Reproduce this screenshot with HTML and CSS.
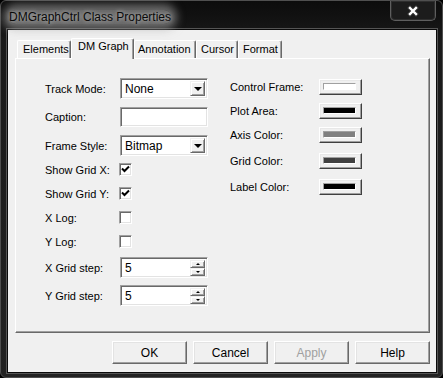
FILE: index.html
```html
<!DOCTYPE html>
<html lang="en">
<head>
    <meta charset="UTF-8">
    <title>DMGraphCtrl Class Properties</title>
    <link rel="stylesheet" href="styles.css">
</head>
<body>
    <div class="window">
        <div class="titlebar">
            <span class="title">DMGraphCtrl Class Properties</span>
            <div class="close-btn">
                <svg width="14" height="12" viewBox="0 0 14 12">
                    <path d="M4 3 L10 9 M10 3 L4 9" stroke="#303030" stroke-width="4.5" stroke-linecap="square"/>
                    <path d="M4 3 L10 9 M10 3 L4 9" stroke="#ffffff" stroke-width="2.4" stroke-linecap="square"/>
                </svg>
            </div>
        </div>

        <div class="client">
            <div class="tabs">
                <div class="tab tab-elements">Elements</div>
                <div class="tab tab-active">DM Graph</div>
                <div class="tab tab-annotation">Annotation</div>
                <div class="tab tab-cursor">Cursor</div>
                <div class="tab tab-format">Format</div>
            </div>

            <div class="panel">
                <div class="col-left">
                    <div class="row row-combo">
                        <span class="label">Track Mode:</span>
                        <div class="field combo"><span class="value">None</span><span class="drop-btn"><i class="arrow"></i></span></div>
                    </div>
                    <div class="row row-edit">
                        <span class="label">Caption:</span>
                        <div class="field edit"></div>
                    </div>
                    <div class="row row-combo">
                        <span class="label">Frame Style:</span>
                        <div class="field combo"><span class="value">Bitmap</span><span class="drop-btn"><i class="arrow"></i></span></div>
                    </div>
                    <div class="row row-check first-check">
                        <span class="label">Show Grid X:</span>
                        <span class="checkbox"><svg width="9" height="9" viewBox="0 0 9 9"><path d="M1 3.5 L3.5 6 L8 1.5" fill="none" stroke="#000" stroke-width="2"/></svg></span>
                    </div>
                    <div class="row row-check">
                        <span class="label">Show Grid Y:</span>
                        <span class="checkbox"><svg width="9" height="9" viewBox="0 0 9 9"><path d="M1 3.5 L3.5 6 L8 1.5" fill="none" stroke="#000" stroke-width="2"/></svg></span>
                    </div>
                    <div class="row row-check">
                        <span class="label">X Log:</span>
                        <span class="checkbox"></span>
                    </div>
                    <div class="row row-check">
                        <span class="label">Y Log:</span>
                        <span class="checkbox"></span>
                    </div>
                    <div class="row row-spin first-spin">
                        <span class="label">X Grid step:</span>
                        <div class="field spin"><span class="value">5</span><span class="spin-btns"><span class="spin-btn"><i class="up"></i></span><span class="spin-btn"><i class="down"></i></span></span></div>
                    </div>
                    <div class="row row-spin">
                        <span class="label">Y Grid step:</span>
                        <div class="field spin"><span class="value">5</span><span class="spin-btns"><span class="spin-btn"><i class="up"></i></span><span class="spin-btn"><i class="down"></i></span></span></div>
                    </div>
                </div>

                <div class="col-right">
                    <div class="crow">
                        <span class="clabel">Control Frame:</span>
                        <span class="color-btn"><span class="swatch" style="background:#ffffff"></span></span>
                    </div>
                    <div class="crow">
                        <span class="clabel">Plot Area:</span>
                        <span class="color-btn"><span class="swatch" style="background:#000000"></span></span>
                    </div>
                    <div class="crow">
                        <span class="clabel">Axis Color:</span>
                        <span class="color-btn"><span class="swatch" style="background:#808080"></span></span>
                    </div>
                    <div class="crow wide">
                        <span class="clabel">Grid Color:</span>
                        <span class="color-btn"><span class="swatch" style="background:#404040"></span></span>
                    </div>
                    <div class="crow wide">
                        <span class="clabel">Label Color:</span>
                        <span class="color-btn"><span class="swatch" style="background:#000000"></span></span>
                    </div>
                </div>
            </div>

            <div class="buttons">
                <div class="btn">OK</div>
                <div class="btn">Cancel</div>
                <div class="btn disabled">Apply</div>
                <div class="btn">Help</div>
            </div>
        </div>
    </div>
</body>
</html>
```

FILE: styles.css
```css
body {
    margin: 0;
    background: #000;
    font-family: "Liberation Sans", Arial, sans-serif;
    font-size: 11px;
    color: #000;
}
.window {
    width: 443px;
    height: 378px;
    box-sizing: border-box;
    border: 1px solid #4f4f4f;
    border-radius: 6px;
    background: linear-gradient(#0c0c0c, #1a1a1a 40px, #222 100%);
    padding: 0 6px 5px 7px;
}
.titlebar {
    height: 29px;
    display: flex;
    justify-content: space-between;
    align-items: flex-start;
}
.title {
    font-size: 12px;
    color: #0a0a0a;
    margin: 9px 0 0 1px;
    line-height: 14px;
    background: rgba(175, 175, 175, 0.55);
    box-shadow: 0 0 9px 6px rgba(175, 175, 175, 0.55);
    border-radius: 8px;
    text-shadow: 0 0 4px rgba(230, 230, 230, 0.9);
}
.close-btn {
    width: 46px;
    height: 20px;
    box-sizing: border-box;
    border: 1px solid #5e5e5e;
    border-top: none;
    border-radius: 0 0 5px 5px;
    background: #1c1c1c;
    box-shadow: inset 0 0 0 1px #2e2e2e;
    display: flex;
    justify-content: center;
    align-items: center;
}
.client {
    height: 342px;
    background: #f0f0f0;
    box-shadow: 0 0 0 1px #0a0a0a, 0 0 0 2px #555;
}
.tabs {
    height: 28px;
    display: flex;
    align-items: flex-end;
    padding-left: 9px;
}
.tab {
    height: 18px;
    box-sizing: border-box;
    border-top: 1px solid #fff;
    border-left: 1px solid #fff;
    border-right: 1px solid #696969;
    border-radius: 2px 2px 0 0;
    box-shadow: inset -1px 0 #a0a0a0;
    padding: 2px 0 0 5px;
    background: #f0f0f0;
}
.tab-elements { width: 54px; }
.tab-active {
    width: 63px;
    height: 21px;
    margin-bottom: -1px;
    position: relative;
    z-index: 1;
    padding: 1px 0 0 6px;
}
.tab-annotation { width: 62px; padding-left: 3px; }
.tab-cursor { width: 42px; padding-left: 4px; }
.tab-format { width: 44px; padding-left: 4px; }
.panel {
    margin-left: 7px;
    width: 415px;
    height: 275px;
    box-sizing: border-box;
    border-top: 1px solid #fff;
    border-left: 1px solid #fff;
    border-right: 1px solid #696969;
    border-bottom: 1px solid #696969;
    box-shadow: inset -1px -1px #a0a0a0;
    padding: 19px 0 0 29px;
    display: flex;
    gap: 22px;
}
.col-left {
    width: 163px;
    display: flex;
    flex-direction: column;
}
.row {
    display: flex;
    align-items: center;
}
.row-combo, .row-edit {
    height: 21px;
    margin-bottom: 8px;
}
.row-edit { height: 20px; }
.row-check {
    height: 13px;
    margin-bottom: 11px;
}
.first-check { margin-top: -1px; }
.row-spin {
    height: 21px;
    margin-bottom: 7px;
}
.first-spin { margin-top: -2px; }
.label {
    width: 75px;
    flex-shrink: 0;
}
.field {
    width: 88px;
    height: 21px;
    flex-shrink: 0;
    box-sizing: border-box;
    border: 1px solid;
    border-color: #a0a0a0 #fff #fff #a0a0a0;
    box-shadow: inset 1px 1px #696969, inset -1px -1px #e3e3e3;
    background: #fff;
    display: flex;
    align-items: center;
    justify-content: space-between;
    padding: 0 2px 0 4px;
    font-size: 12px;
}
.edit { height: 20px; }
.checkbox {
    width: 13px;
    height: 13px;
    box-sizing: border-box;
    border: 1px solid;
    border-color: #a0a0a0 #fff #fff #a0a0a0;
    box-shadow: inset 1px 1px #696969, inset -1px -1px #e3e3e3;
    background: #fff;
    display: flex;
    align-items: center;
    justify-content: center;
    margin-left: -1px;
}
.drop-btn {
    width: 15px;
    height: 15px;
    box-sizing: border-box;
    border: 1px solid;
    border-color: #f0f0f0 #696969 #696969 #f0f0f0;
    box-shadow: inset 1px 1px #fff, inset -1px -1px #a0a0a0;
    background: #f0f0f0;
    display: flex;
    align-items: center;
    justify-content: center;
}
.arrow {
    width: 0;
    height: 0;
    border-left: 4px solid transparent;
    border-right: 4px solid transparent;
    border-top: 4px solid #000;
    margin-top: 1px;
}
.spin-btns {
    display: flex;
    flex-direction: column;
}
.spin-btn {
    width: 15px;
    height: 8px;
    box-sizing: border-box;
    border: 1px solid;
    border-color: #f0f0f0 #696969 #696969 #f0f0f0;
    box-shadow: inset 1px 1px #fff, inset -1px -1px #a0a0a0;
    background: #f0f0f0;
    display: flex;
    align-items: center;
    justify-content: center;
}
.up {
    width: 0;
    height: 0;
    border-left: 2px solid transparent;
    border-right: 2px solid transparent;
    border-bottom: 2px solid #000;
}
.down {
    width: 0;
    height: 0;
    border-left: 2px solid transparent;
    border-right: 2px solid transparent;
    border-top: 2px solid #000;
}
.col-right {
    padding-top: 1px;
    display: flex;
    flex-direction: column;
}
.crow {
    height: 16px;
    display: flex;
    align-items: center;
    margin-bottom: 8px;
}
.crow.wide { margin-top: 2px; }
.clabel {
    width: 89px;
}
.color-btn {
    width: 43px;
    height: 16px;
    box-sizing: border-box;
    border: 1px solid;
    border-color: #fff #404040 #404040 #fff;
    box-shadow: inset -1px -1px #a0a0a0, inset 1px 1px #e8e8e8;
    background: #f0f0f0;
    padding: 3px 5px 4px 3px;
    display: flex;
}
.swatch {
    flex: 1;
    border: 1px solid;
    border-color: #a0a0a0 #fff #fff #a0a0a0;
}
.buttons {
    display: flex;
    justify-content: flex-end;
    gap: 6px;
    padding: 8px 6px 0 0;
}
.btn {
    width: 75px;
    height: 23px;
    box-sizing: border-box;
    border: 1px solid;
    border-color: #fff #696969 #696969 #fff;
    box-shadow: inset -1px -1px #a0a0a0, inset 1px 1px #e3e3e3;
    background: #f0f0f0;
    display: flex;
    align-items: center;
    justify-content: center;
    font-size: 12px;
}
.btn.disabled {
    color: #a0a0a0;
}
```
